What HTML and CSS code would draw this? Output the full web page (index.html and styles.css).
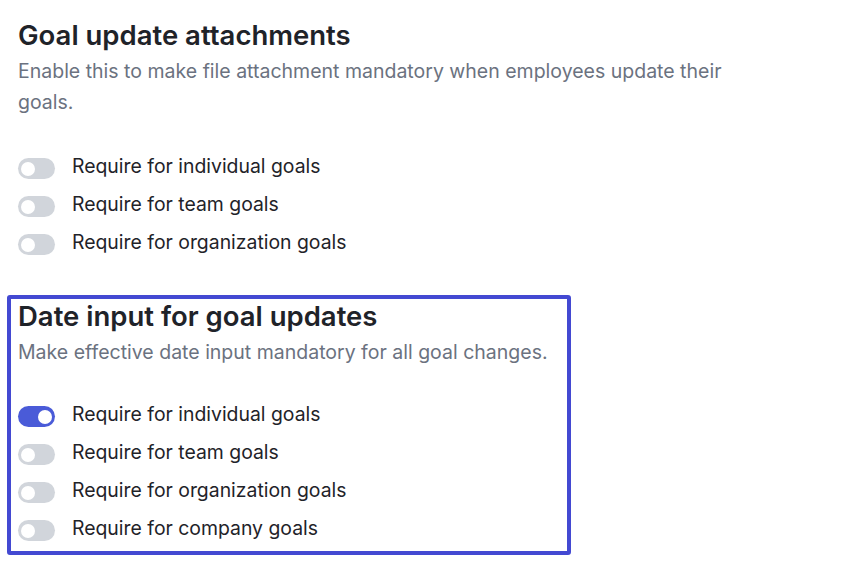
FILE: index.html
```html
<!DOCTYPE html>
<html lang="en">
<head>
<meta charset="utf-8">
<title>Goal settings</title>
<link rel="stylesheet" href="styles.css">
</head>
<body>
<main class="page">
  <section class="setting">
    <h2 class="setting-title">Goal update attachments</h2>
    <p class="setting-desc">Enable this to make file attachment mandatory when employees update their goals.</p>
    <ul class="toggle-list">
      <li class="toggle-row"><span class="toggle"><span class="knob"></span></span><span class="toggle-label">Require for individual goals</span></li>
      <li class="toggle-row"><span class="toggle"><span class="knob"></span></span><span class="toggle-label">Require for team goals</span></li>
      <li class="toggle-row"><span class="toggle"><span class="knob"></span></span><span class="toggle-label">Require for organization goals</span></li>
    </ul>
  </section>
  <section class="setting setting-highlight">
    <h2 class="setting-title">Date input for goal updates</h2>
    <p class="setting-desc">Make effective date input mandatory for all goal changes.</p>
    <ul class="toggle-list">
      <li class="toggle-row"><span class="toggle is-on"><span class="knob"></span></span><span class="toggle-label">Require for individual goals</span></li>
      <li class="toggle-row"><span class="toggle"><span class="knob"></span></span><span class="toggle-label">Require for team goals</span></li>
      <li class="toggle-row"><span class="toggle"><span class="knob"></span></span><span class="toggle-label">Require for organization goals</span></li>
      <li class="toggle-row"><span class="toggle"><span class="knob"></span></span><span class="toggle-label">Require for company goals</span></li>
    </ul>
  </section>
</main>
</body>
</html>
```

FILE: styles.css
```css
* { box-sizing: border-box; }
html, body { margin: 0; background: #ffffff; }
body {
  font-family: Inter, "Noto Sans", "Liberation Sans", sans-serif;
  color: #1f2937;
}
.page {
  padding: 18px 18px 0 18px;
}
.setting {
  width: 720px;
}
.setting-title {
  margin: 0;
  font-size: 27.5px;
  font-weight: 600;
  line-height: 34px;
  color: #1f2329;
}
.setting-desc {
  margin: 4px 0 0 0;
  font-size: 19.5px;
  line-height: 31px;
  color: #6b7280;
}
.toggle-list {
  list-style: none;
  margin: 40px 0 0 0;
  padding: 0;
  display: flex;
  flex-direction: column;
  gap: 17px;
}
.setting-highlight .toggle-list { margin-top: 38px; }
.toggle-row {
  display: flex;
  align-items: flex-start;
  gap: 17px;
}
.toggle {
  width: 37px;
  height: 21px;
  border-radius: 11px;
  background: #d1d5db;
  padding: 0 3px;
  display: flex;
  align-items: center;
  flex-shrink: 0;
}
.knob {
  width: 14px;
  height: 14px;
  border-radius: 50%;
  background: #ffffff;
}
.toggle.is-on {
  background: #4a5bd8;
  justify-content: flex-end;
}
.toggle-label {
  font-size: 19.4px;
  line-height: 16px;
  color: #1f2329;
}
.setting-highlight {
  margin-top: 40px;
  margin-left: -11px;
  width: 564px;
  border: 4px solid #4349d2;
  border-radius: 3px;
  padding: 0 7px 10px 7px;
}
```
